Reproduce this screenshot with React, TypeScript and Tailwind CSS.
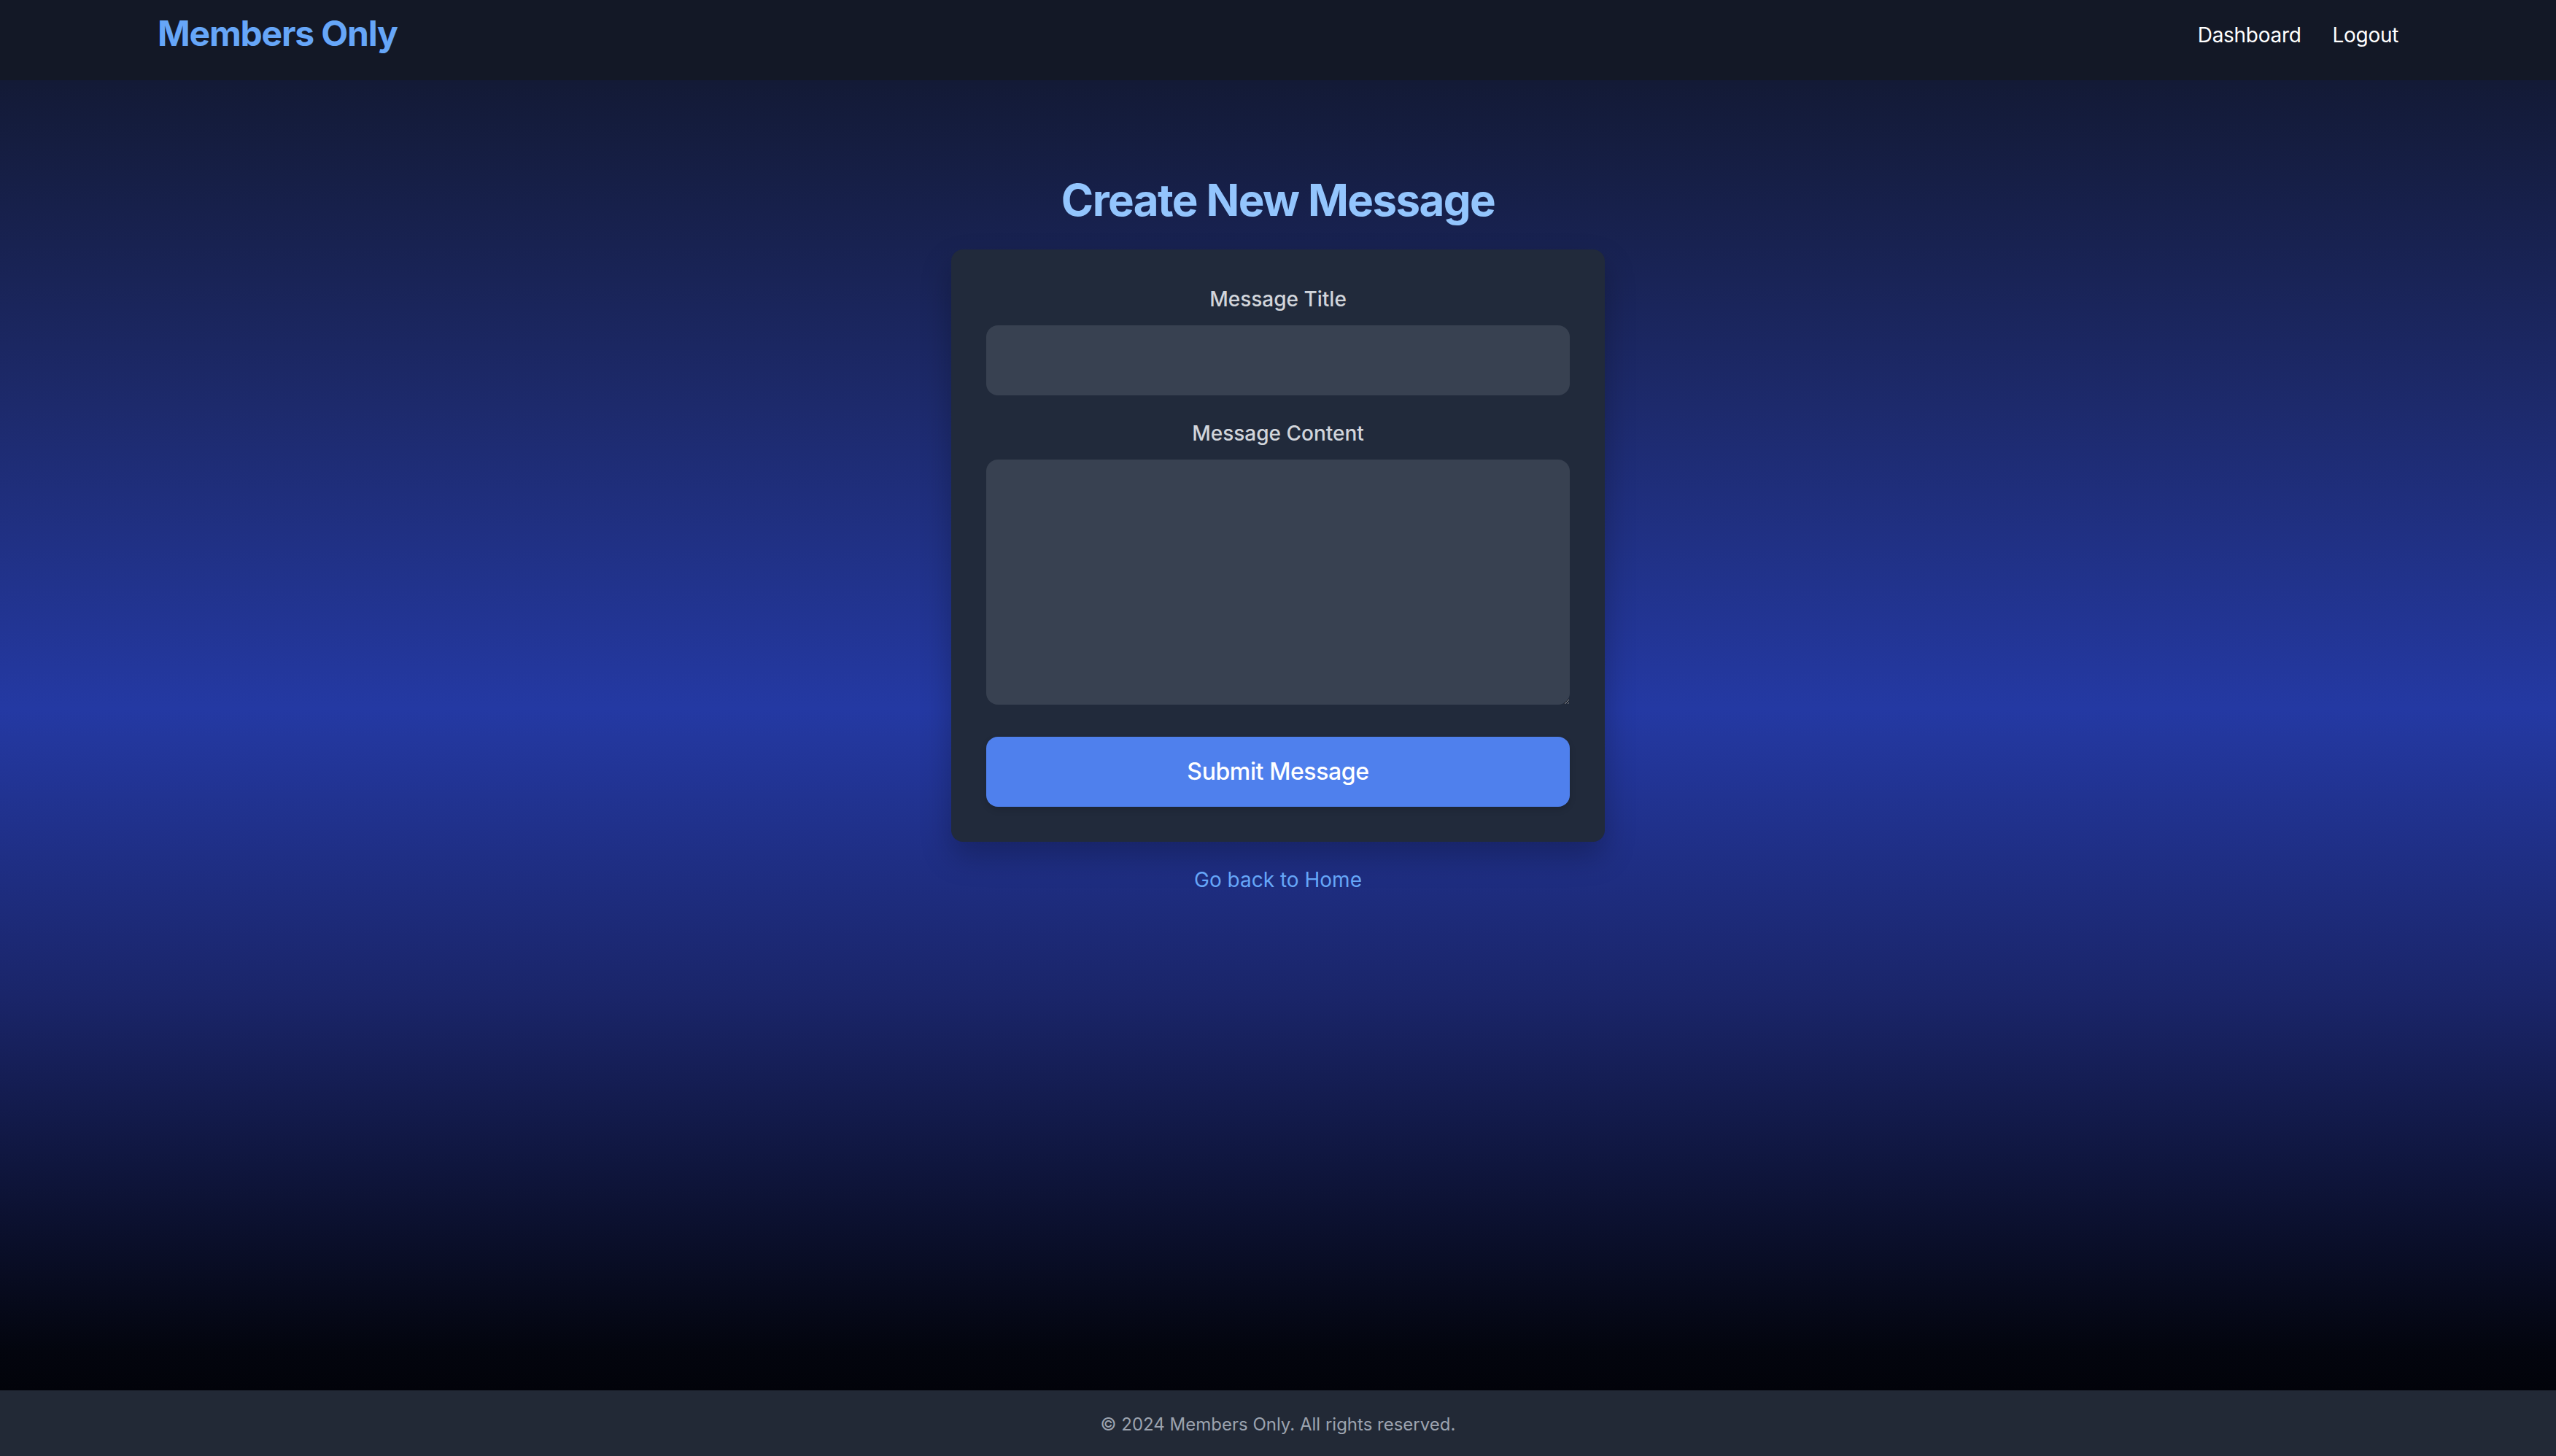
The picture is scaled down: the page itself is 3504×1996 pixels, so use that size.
import React from 'react';

// Page was captured at 2x, so every size below is the CSS value doubled.
const NewMessage = () => {
  return (
    <div className="flex min-h-screen flex-col font-['Inter','Liberation_Sans',sans-serif]">
      <header className="h-[110px] bg-[#131826]">
        <div className="mx-auto flex max-w-[3072px] items-center justify-between pt-[14px]">
          <a href="#" className="text-[48px] font-bold leading-[64px] tracking-[-1.2px] text-[#66a6f8]">
            Members Only
          </a>
          <nav className="mt-[4px] flex items-center gap-[43px] text-[28px] leading-[40px] tracking-[-0.3px] text-white">
            <a href="#">Dashboard</a>
            <a href="#">Logout</a>
          </nav>
        </div>
      </header>

      <main className="flex flex-1 flex-col items-center bg-[linear-gradient(to_bottom,#131a36_0%,#1d2a6c_25%,#2439a3_48%,#1a2569_70%,#03050e_97%,#02030a_100%)] pt-[128px]">
        <h1 className="mb-[32px] text-[60px] font-bold leading-[72px] tracking-[-1.6px] text-[#93c5fd]">
          Create New Message
        </h1>

        <form className="w-[896px] rounded-[16px] bg-[#212a3b] p-[48px] shadow-[0_20px_40px_rgba(0,0,0,0.25)]">
          <label className="mb-[16px] block text-center text-[28px] font-medium leading-[40px] text-[#d1d5db]">
            Message Title
          </label>
          <input
            type="text"
            className="mb-[32px] block h-[96px] w-full rounded-[16px] bg-[#384151] px-[24px] text-[32px] text-white outline-none"
          />
          <label className="mb-[16px] block text-center text-[28px] font-medium leading-[40px] text-[#d1d5db]">
            Message Content
          </label>
          <textarea
            rows={6}
            className="block h-[336px] w-full rounded-[16px] bg-[#384151] p-[24px] text-[32px] text-white outline-none"
          />
          <button
            type="button"
            className="mt-[44px] block h-[96px] w-full rounded-[16px] bg-[#4f80ed] text-[32px] font-medium tracking-[-0.4px] text-white shadow-[0_4px_8px_rgba(0,0,0,0.15)]"
          >
            Submit Message
          </button>
        </form>

        <a href="#" className="mt-[32px] text-[28px] leading-[40px] text-[#66a6f8]">
          Go back to Home
        </a>
      </main>

      <footer className="flex h-[90px] items-center justify-center bg-[#222936] pt-[4px] text-[24px] leading-[32px] text-[#9ca3af]">
        © 2024 Members Only. All rights reserved.
      </footer>
    </div>
  );
};

export default function App() {
  return <NewMessage />;
}
